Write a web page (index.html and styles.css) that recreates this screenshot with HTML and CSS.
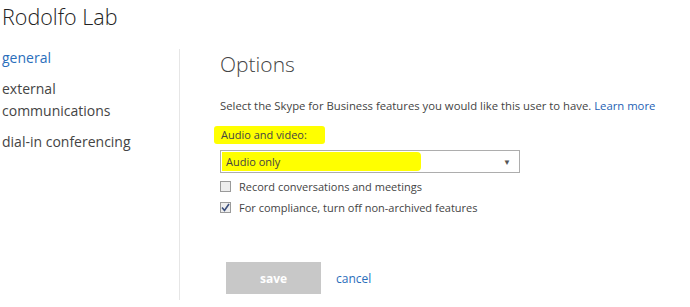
FILE: index.html
```html
<!doctype html>
<html lang="en">
	<head>
		<meta charset="UTF-8" />
		<title>Rodolfo Lab</title>
		<link rel="stylesheet" href="styles.css">
	</head>
	<body>
		<h1 class="page-title">Rodolfo Lab</h1>
		<div class="layout">
			<nav class="side-nav">
				<a class="nav-item active" href="#">general</a>
				<a class="nav-item" href="#">external communications</a>
				<a class="nav-item" href="#">dial-in conferencing</a>
			</nav>
			<div class="content">
				<h2 class="section-title">Options</h2>
				<p class="intro">Select the Skype for Business features you would like this user to have. <a href="#">Learn more</a></p>
				<div class="field-label"><span class="marker marker-label">Audio and video:</span></div>
				<div class="select-box">
					<span class="marker marker-select">Audio only</span>
					<span class="select-arrow">&#9660;</span>
				</div>
				<label class="check-row"><span class="checkbox"></span>Record conversations and meetings</label>
				<label class="check-row"><span class="checkbox checked"><svg width="9" height="9" viewBox="0 0 9 9"><path d="M1 4.5 L3.5 7.5 L8 1" fill="none" stroke="#3b4f7d" stroke-width="1.6"/></svg></span>For compliance, turn off non-archived features</label>
				<div class="actions">
					<button class="save-button">save</button>
					<a class="cancel-link" href="#">cancel</a>
				</div>
			</div>
		</div>
	</body>
</html>
```

FILE: styles.css
```css
body {
	margin: 0;
	background-color: #fff;
	font-family: "Open Sans", "Noto Sans", sans-serif;
	color: #444;
}
a {
	text-decoration: none;
}
.page-title {
	margin: 0;
	padding: 2px 0 0 2px;
	font-size: 21.5px;
	font-weight: 300;
	line-height: 30px;
	color: #222;
}
.layout {
	display: flex;
	margin-top: 17px;
}
.side-nav {
	width: 180px;
	height: 251px;
	border-right: 1px solid #e6e6e6;
	display: flex;
	flex-direction: column;
	gap: 9px;
	box-sizing: border-box;
}
.nav-item {
	display: block;
	padding-left: 2px;
	width: 165px;
	font-size: 14px;
	line-height: 22px;
	color: #444;
}
.nav-item:first-child {
	margin-top: -2px;
}
.nav-item.active {
	color: #2a6ebb;
}
.content {
	padding-left: 40px;
	padding-top: 2px;
}
.section-title {
	margin: 0;
	font-size: 21px;
	font-weight: 300;
	line-height: 26px;
	color: #444;
}
.intro {
	margin: 21px 0 0;
	font-size: 11.3px;
	line-height: 16px;
}
.intro a {
	color: #1e5fb4;
}
.field-label {
	margin-top: 12px;
	font-size: 11px;
	line-height: 18px;
	margin-left: -6px;
}
.marker {
	background-color: #ffff00;
	border-radius: 3px;
}
.marker-label {
	display: inline-block;
	padding: 0 18px 0 7px;
}
.select-box {
	margin-top: 6px;
	width: 300px;
	height: 23px;
	border: 1px solid #adadad;
	box-sizing: border-box;
	display: flex;
	align-items: center;
	justify-content: space-between;
	padding: 1px 8px 1px 1px;
	font-size: 11px;
}
.marker-select {
	width: 195px;
	height: 19px;
	line-height: 19px;
	padding-left: 4px;
	border-radius: 0 4px 4px 0;
}
.select-arrow {
	font-size: 8px;
	color: #555;
}
.check-row {
	display: flex;
	align-items: center;
	gap: 8px;
	font-size: 11px;
	line-height: 21px;
}
.check-row:first-of-type {
	margin-top: 3px;
}
.checkbox {
	width: 11px;
	height: 11px;
	border: 1px solid #9a9a9a;
	background-color: #eee;
	box-sizing: border-box;
	display: flex;
	align-items: center;
	justify-content: center;
}
.actions {
	display: flex;
	align-items: center;
	gap: 15px;
	margin-top: 44px;
	padding-left: 6px;
}
.save-button {
	width: 95px;
	height: 32px;
	border: none;
	background-color: #c8c8c8;
	color: #fff;
	font-family: inherit;
	font-size: 12px;
	font-weight: 700;
}
.cancel-link {
	font-size: 12px;
	color: #2a6ebb;
}
```
